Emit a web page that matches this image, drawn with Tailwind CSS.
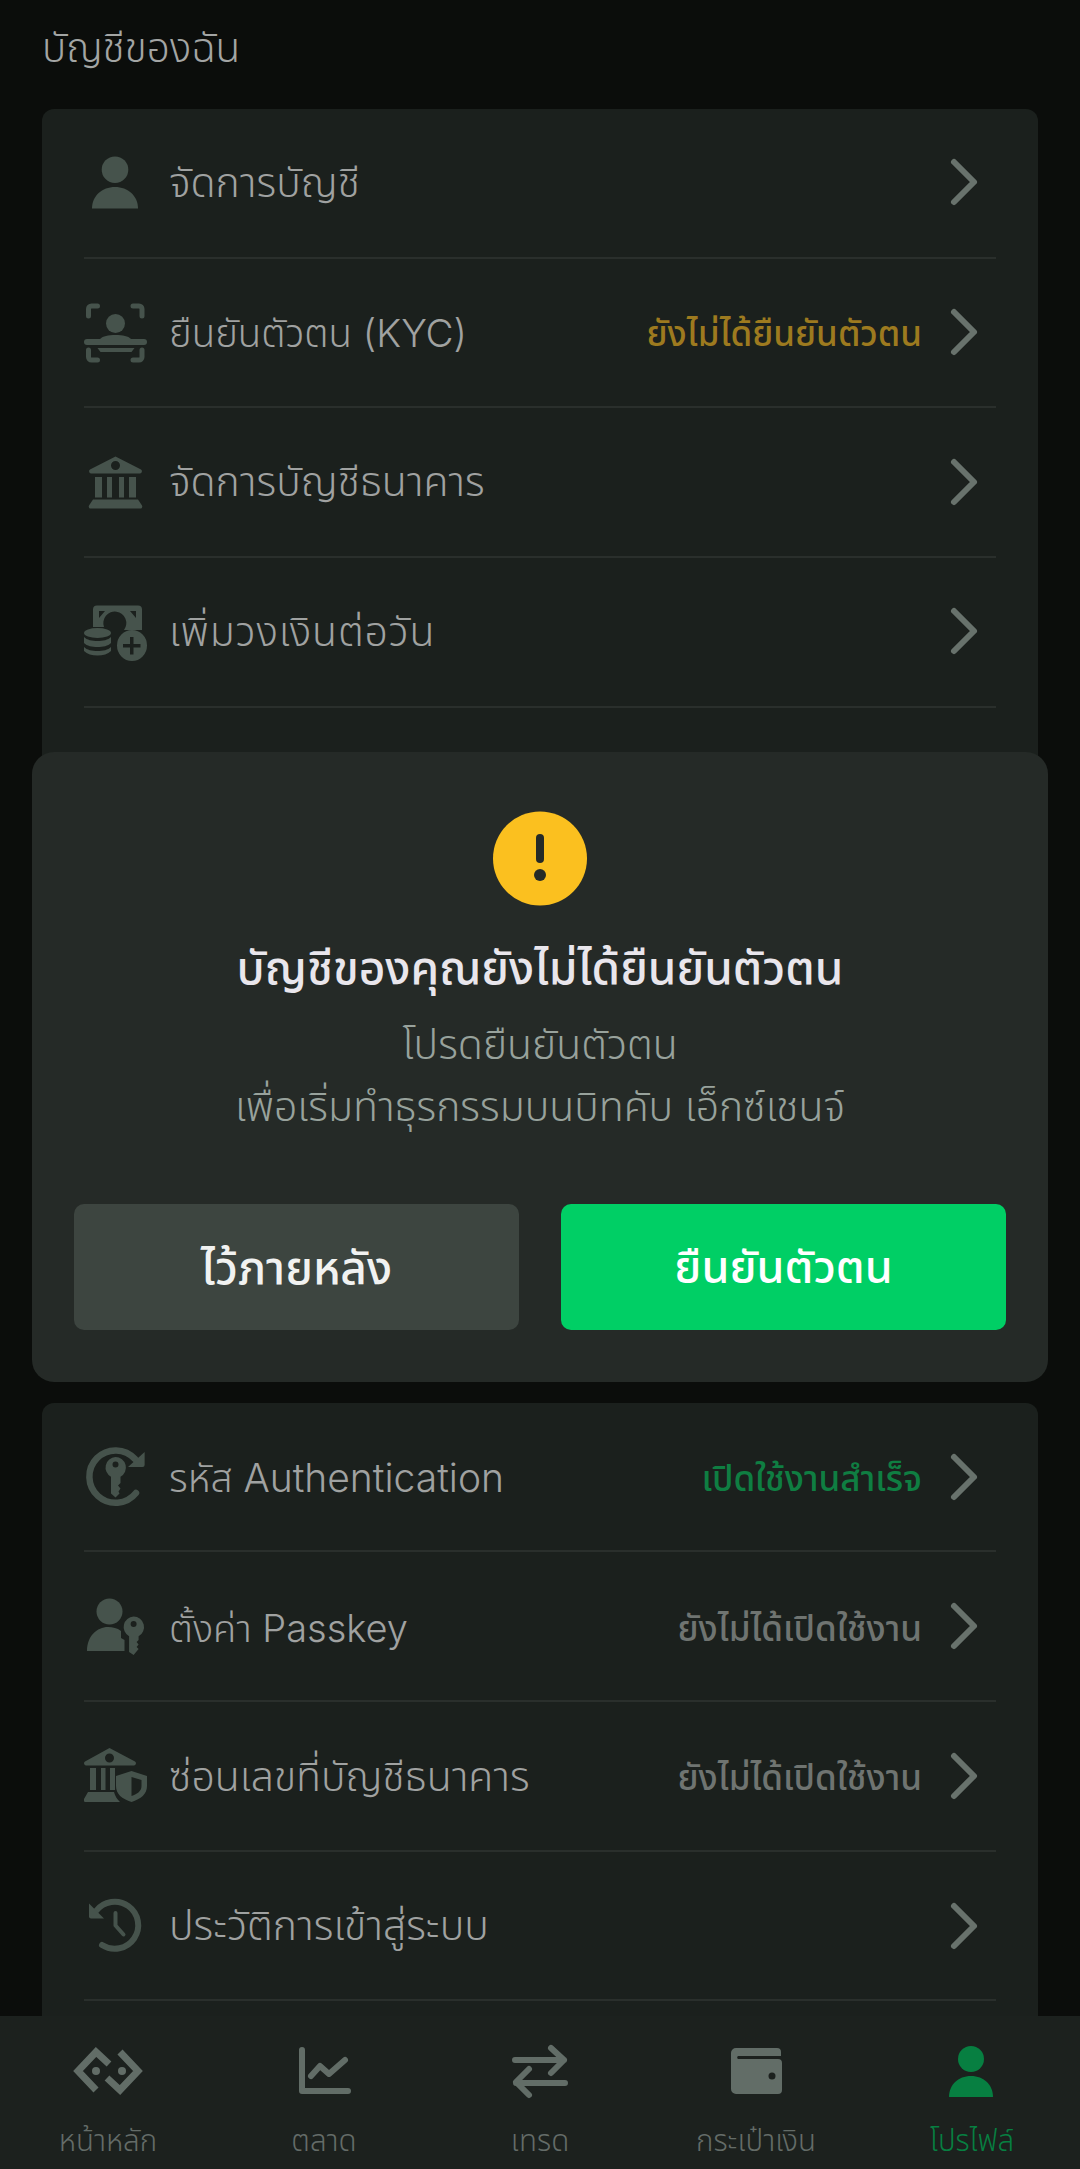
<!DOCTYPE html>
<html lang="th">
<head>
<meta charset="UTF-8">
<meta name="viewport" content="width=device-width, initial-scale=1.0">
<title>บัญชีของฉัน</title>
<script src="https://cdn.jsdelivr.net/npm/@tailwindcss/browser@4"></script>
</head>
<body class="bg-[#0b0d0b] font-['Inter','Noto_Sans_Thai','Noto_Sans',sans-serif]">
<div class="relative w-[1080px] h-[2169px] overflow-hidden">

  <!-- page behind the dialog -->
  <h1 class="h-[109px] pl-[42px] pt-[24px] text-[40.5px] leading-[48px] font-light text-[#a3a5a4]">บัญชีของฉัน</h1>

  <section class="mx-[42px] h-[1000px] rounded-[12px] bg-[#1b201d] px-[42px] text-[41px] text-[#a0a2a1] font-light">
    <div class="flex h-[147.7px] items-center border-b-2 border-[#2a2f2c] box-content">
      <svg class="w-[64px] h-[64px] mr-[21px] shrink-0" viewBox="0 0 64 64" fill="#46534c"><circle cx="31" cy="18.7" r="13.3"/><path d="M8 57.5C8 45 18 36 31 36s23 9 23 21.5z"/></svg>
      <span class="flex-1">จัดการบัญชี</span>
      <svg class="w-[34px] h-[50px] mr-[15px] mb-[2px] shrink-0" viewBox="0 0 34 50" fill="none" stroke="#68726c" stroke-width="6" stroke-linecap="round" stroke-linejoin="round"><path d="M7 5l20 20L7 45"/></svg>
    </div>
    <div class="flex h-[147.7px] items-center border-b-2 border-[#2a2f2c] box-content">
      <svg class="w-[64px] h-[64px] mr-[21px] shrink-0" viewBox="0 0 64 64" fill="#46534c"><circle cx="31.5" cy="22.5" r="9.5"/><path d="M16 38c3-3 8-4 15.500-4s12.500 1 15.500 4z"/><rect x="0" y="38" width="63" height="6" rx="3"/><path d="M13.500 47h37l-3 4h-31z"/><path d="M4.500 15V8a3 3 0 0 1 3-3h6M58 15V8a3 3 0 0 0-3-3h-6M4.500 49v7a3 3 0 0 0 3 3h6M58 49v7a3 3 0 0 1-3 3h-6" fill="none" stroke="#46534c" stroke-width="5" stroke-linecap="round"/></svg>
      <span class="flex-1 pt-[2px] text-[38.5px]">ยืนยันตัวตน (KYC)</span>
      <span class="mr-[25px] pt-[2px] text-[35px] font-medium text-[#9d7a1f]">ยังไม่ได้ยืนยันตัวตน</span>
      <svg class="w-[34px] h-[50px] mr-[15px] mb-[2px] shrink-0" viewBox="0 0 34 50" fill="none" stroke="#68726c" stroke-width="6" stroke-linecap="round" stroke-linejoin="round"><path d="M7 5l20 20L7 45"/></svg>
    </div>
    <div class="flex h-[147.7px] items-center border-b-2 border-[#2a2f2c] box-content">
      <svg class="w-[64px] h-[64px] mr-[21px] shrink-0" viewBox="0 0 64 64" fill="#46534c"><path fill-rule="evenodd" d="M31.500 6.500L57 19.500a2.200 2.200 0 0 1-1 4H7a2.200 2.200 0 0 1-1-4zM31.500 11a4.500 4.500 0 1 0 0 9 4.500 4.500 0 0 0 0-9z"/><path d="M11 27h7v20.500h-7zM23 27h5v20.500h-5zM35 27h5v20.500h-5zM45 27h7v20.500h-7z"/><path d="M9 49.500h45l4 6a2 2 0 0 1-2 3H7a2 2 0 0 1-2-3z"/></svg>
      <span class="flex-1">จัดการบัญชีธนาคาร</span>
      <svg class="w-[34px] h-[50px] mr-[15px] shrink-0" viewBox="0 0 34 50" fill="none" stroke="#68726c" stroke-width="6" stroke-linecap="round" stroke-linejoin="round"><path d="M7 5l20 20L7 45"/></svg>
    </div>
    <div class="flex h-[147.7px] items-center border-b-2 border-[#2a2f2c] box-content">
      <svg class="w-[64px] h-[64px] mr-[21px] shrink-0" viewBox="0 0 64 64" fill="#46534c"><path fill-rule="evenodd" d="M13 5.500h41a4 4 0 0 1 4 4V30H40a11.500 11.500 0 1 0-20-3H9V9.500a4 4 0 0 1 4-4zM15 11v7l6-7zM52 11h-6l6 7z"/><ellipse cx="13.500" cy="33" rx="13.500" ry="5"/><path d="M0 37c3 3 8 4 13.500 4S24 40 27 37v6c-3 3-8 4-13.500 4S3 46 0 43zM0 47c3 3 8 4 13.500 4S24 50 27 47v4c-3 3-8 4.500-13.500 4.500S3 54 0 51z"/><path fill-rule="evenodd" d="M48 30a15 15.500 0 1 1 0 31 15 15.500 0 0 1 0-31zM46 37v7h-7v3.500h7v7h3.500v-7h7V44h-7v-7z"/></svg>
      <span class="flex-1 tracking-[0.8px]">เพิ่มวงเงินต่อวัน</span>
      <svg class="w-[34px] h-[50px] mr-[15px] mb-[2px] shrink-0" viewBox="0 0 34 50" fill="none" stroke="#68726c" stroke-width="6" stroke-linecap="round" stroke-linejoin="round"><path d="M7 5l20 20L7 45"/></svg>
    </div>
  </section>

  <section class="mx-[42px] mt-[294px] h-[800px] rounded-[12px] bg-[#1b201d] px-[42px] text-[41px] text-[#a0a2a1] font-light">
    <div class="flex h-[147px] items-center border-b-2 border-[#2a2f2c] box-content">
      <svg class="w-[64px] h-[64px] mr-[21px] shrink-0" viewBox="0 0 64 64" fill="#46534c"><path d="M51 14A26.200 26.200 0 1 0 52 48" fill="none" stroke="#46534c" stroke-width="6.500" stroke-linecap="round"/><path d="M60.600 7v13a2 2 0 0 1-2 2H44z"/><path fill-rule="evenodd" d="M31.500 12a10.500 10.500 0 0 1 5 19.700V38l-2.500 2.500 2.500 3-2 3 1 2-4 4-4.500-4V31.700a10.500 10.500 0 0 1 4.500-19.700zm0 4.500a3 3 0 1 0 0 6 3 3 0 0 0 0-6z"/></svg>
      <span class="flex-1 pt-[4px] text-[39px]">รหัส Authentication</span>
      <span class="mr-[25px] pt-[4px] text-[35px] font-medium text-[#0f7e42]">เปิดใช้งานสำเร็จ</span>
      <svg class="w-[34px] h-[50px] mr-[15px] shrink-0" viewBox="0 0 34 50" fill="none" stroke="#68726c" stroke-width="6" stroke-linecap="round" stroke-linejoin="round"><path d="M7 5l20 20L7 45"/></svg>
    </div>
    <div class="flex h-[148px] items-center border-b-2 border-[#2a2f2c] box-content">
      <svg class="w-[64px] h-[64px] mr-[21px] shrink-0" viewBox="0 0 64 64" fill="#46534c"><circle cx="25.500" cy="17.500" r="13"/><path d="M3 57c0-15 10-24 21-24 5 0 9 1 13 4v7l3.500 2V57z"/><path fill-rule="evenodd" d="M49.600 22.500a10.500 10.500 0 0 1 5 19.700V46l-2 2 2 2.500-2 2.500 2 2-5 6-4.500-3V42.200a10.500 10.500 0 0 1 4.500-19.700zm0 4.500a3 3 0 1 0 0 6 3 3 0 0 0 0-6z"/></svg>
      <span class="flex-1 pt-[4px] text-[38px]">ตั้งค่า Passkey</span>
      <span class="mr-[25px] pt-[4px] text-[35px] font-medium text-[#6f7471]">ยังไม่ได้เปิดใช้งาน</span>
      <svg class="w-[34px] h-[50px] mr-[15px] shrink-0" viewBox="0 0 34 50" fill="none" stroke="#68726c" stroke-width="6" stroke-linecap="round" stroke-linejoin="round"><path d="M7 5l20 20L7 45"/></svg>
    </div>
    <div class="flex h-[148px] items-center border-b-2 border-[#2a2f2c] box-content">
      <svg class="w-[64px] h-[64px] mr-[21px] shrink-0" viewBox="0 0 64 64" fill="#46534c"><path fill-rule="evenodd" d="M25.500 4L51 17.500a2.200 2.200 0 0 1-1 4H2a2.200 2.200 0 0 1-1-4zM25.500 9.500a4.500 4.500 0 1 0 0 9 4.500 4.500 0 0 0 0-9z"/><path d="M6 24h6v22H6zM17 24h4.500v22H17zM26 24h5v22h-5z"/><path d="M4 48h26c1 4 3 7 6 10H2a2 2 0 0 1-2-3z"/><path fill-rule="evenodd" d="M47.500 27l15.500 5v10c0 8-6 13-15.500 16C38 55 32 50 32 42V32zM47.500 33v19c6-2 10-5 10-10v-6z"/></svg>
      <span class="flex-1 pt-[2px]">ซ่อนเลขที่บัญชีธนาคาร</span>
      <span class="mr-[25px] pt-[2px] text-[35px] font-medium text-[#6f7471]">ยังไม่ได้เปิดใช้งาน</span>
      <svg class="w-[34px] h-[50px] mr-[15px] shrink-0" viewBox="0 0 34 50" fill="none" stroke="#68726c" stroke-width="6" stroke-linecap="round" stroke-linejoin="round"><path d="M7 5l20 20L7 45"/></svg>
    </div>
    <div class="flex h-[147px] items-center border-b-2 border-[#2a2f2c] box-content">
      <svg class="w-[64px] h-[64px] mr-[21px] shrink-0" viewBox="0 0 64 64" fill="#46534c"><path d="M12 17A23.500 23.500 0 1 1 18 51" fill="none" stroke="#46534c" stroke-width="6" stroke-linecap="round"/><path d="M5 9.500v13a2 2 0 0 0 2 2h13z"/><path d="M31.500 19v12.500l8 9" fill="none" stroke="#46534c" stroke-width="4" stroke-linecap="round" stroke-linejoin="round"/></svg>
      <span class="flex-1">ประวัติการเข้าสู่ระบบ</span>
      <svg class="w-[34px] h-[50px] mr-[15px] shrink-0" viewBox="0 0 34 50" fill="none" stroke="#68726c" stroke-width="6" stroke-linecap="round" stroke-linejoin="round"><path d="M7 5l20 20L7 45"/></svg>
    </div>
  </section>

  <!-- dialog -->
  <div class="absolute left-[32px] top-[752px] w-[1016px] h-[630px] rounded-[22px] bg-[#252a27] px-[42px] flex flex-col items-center">
    <svg class="mt-[59px] w-[94px] h-[95px]" viewBox="0 0 94 95"><circle cx="47" cy="47.500" r="47" fill="#fbc01f"/><rect x="43" y="23" width="8" height="29" rx="4" fill="#252a27"/><circle cx="47" cy="64" r="6" fill="#252a27"/></svg>
    <h2 class="mt-[35px] text-[46px] leading-[52px] font-medium text-[#e9e6ec]">บัญชีของคุณยังไม่ได้ยืนยันตัวตน</h2>
    <p class="mt-[20px] text-center text-[41px] leading-[62px] font-light text-[#98a29c]">โปรดยืนยันตัวตน<br>เพื่อเริ่มทำธุรกรรมบนบิทคับ เอ็กซ์เชนจ์</p>
    <div class="mt-[67px] flex w-full gap-[42px]">
      <button class="flex-1 h-[126px] rounded-[10px] bg-[#3d4540] text-[46px] font-medium text-[#f1f2f1]">ไว้ภายหลัง</button>
      <button class="flex-1 h-[126px] rounded-[10px] bg-[#00cf65] text-[45px] font-medium text-white">ยืนยันตัวตน</button>
    </div>
  </div>

  <!-- bottom nav -->
  <nav class="absolute left-0 right-0 bottom-0 h-[153px] bg-[#1c211e] flex">
    <a class="flex-1 flex flex-col items-center pt-[19px] text-[#646c68]">
      <svg class="w-[72px] h-[72px]" viewBox="0 0 72 72" fill="none" stroke="#626d67" stroke-width="7" stroke-linejoin="miter"><path d="M37 29L24 17 6 36l18 19"/><path d="M35 43l13 12 18-19-18-19"/><circle cx="24" cy="36" r="4" fill="#626d67" stroke="none"/><circle cx="50" cy="36" r="4" fill="#626d67" stroke="none"/></svg>
      <span class="mt-[11px] text-[29.5px] leading-[44px] font-light">หน้าหลัก</span>
    </a>
    <a class="flex-1 flex flex-col items-center pt-[19px] text-[#646c68]">
      <svg class="w-[72px] h-[72px]" viewBox="0 0 72 72" fill="none" stroke="#626d67" stroke-width="6" stroke-linecap="round" stroke-linejoin="round"><path d="M14 15v41h46"/><path d="M23 41l9-10 9 8 16-14"/></svg>
      <span class="mt-[11px] text-[29.5px] leading-[44px] font-light">ตลาด</span>
    </a>
    <a class="flex-1 flex flex-col items-center pt-[19px] text-[#646c68]">
      <svg class="w-[72px] h-[72px]" viewBox="0 0 72 72" fill="none" stroke="#626d67" stroke-width="6" stroke-linecap="round" stroke-linejoin="round"><path d="M11 25h49M47 13l13 12-13 13"/><path d="M61 48H12M25 34L12 47l13 13"/></svg>
      <span class="mt-[11px] text-[29.5px] leading-[44px] font-light">เทรด</span>
    </a>
    <a class="flex-1 flex flex-col items-center pt-[19px] text-[#646c68]">
      <svg class="w-[72px] h-[72px]" viewBox="0 0 72 72" fill="#626d67"><path d="M16 13h41a4 4 0 0 1 4 4v4H18a2 2 0 0 0 0 3h40a4 4 0 0 1 4 4v27a4 4 0 0 1-4 4H16a5 5 0 0 1-5-5V18a5 5 0 0 1 5-5z"/><circle cx="52" cy="41" r="3.500" fill="#1c211e"/></svg>
      <span class="mt-[11px] text-[29.5px] leading-[44px] font-light">กระเป๋าเงิน</span>
    </a>
    <a class="flex-1 flex flex-col items-center pt-[19px] text-[#077f41]">
      <svg class="w-[72px] h-[72px]" viewBox="0 0 72 72" fill="#077f41"><circle cx="35" cy="24" r="13"/><path d="M13 62c0-12 9-21 22-21s22 9 22 21z"/></svg>
      <span class="mt-[11px] text-[29.5px] leading-[44px] font-light">โปรไฟล์</span>
    </a>
  </nav>
</div>
</body>
</html>
